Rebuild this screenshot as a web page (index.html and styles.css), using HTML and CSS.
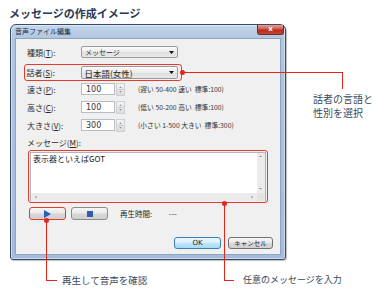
FILE: index.html
```html
<!DOCTYPE html>
<html lang="ja">
<head>
<meta charset="utf-8">
<link rel="stylesheet" href="styles.css">
</head>
<body>
<div class="page">
  <h1 class="heading">メッセージの作成イメージ</h1>
  <div class="window">
    <div class="titlebar">
      <span class="title">音声ファイル編集</span>
      <span class="close">x</span>
    </div>
    <div class="client">
      <div class="row r1">
        <span class="lbl">種類(<u>T</u>):</span>
        <div class="select"><span>メッセージ</span><svg width="5" height="3" viewBox="0 0 5 3"><path d="M0 0H5L2.5 3Z" fill="#111"/></svg></div>
      </div>
      <div class="row hl">
        <span class="lbl">話者(<u>S</u>):</span>
        <div class="select big"><span>日本語(女性)</span><svg width="5" height="3" viewBox="0 0 5 3"><path d="M0 0H5L2.5 3Z" fill="#111"/></svg></div>
      </div>
      <div class="row r3">
        <span class="lbl">速さ(<u>P</u>):</span>
        <div class="spin"><span class="num">100</span></div>
        <div class="spinbtn"><svg width="8" height="13" viewBox="0 0 8 13"><path d="M2.5 4.5L4 3L5.5 4.5Z M2.5 8.5L4 10L5.5 8.5Z" fill="#6b7a8c"/><path d="M0.5 6.5H7.5" stroke="#c8c8c8" stroke-width="1"/></svg></div>
        <span class="hint">(遅い 50-400 速い&nbsp; 標準:100)</span>
      </div>
      <div class="row rn">
        <span class="lbl">高さ(<u>C</u>):</span>
        <div class="spin"><span class="num">100</span></div>
        <div class="spinbtn"><svg width="8" height="13" viewBox="0 0 8 13"><path d="M2.5 4.5L4 3L5.5 4.5Z M2.5 8.5L4 10L5.5 8.5Z" fill="#6b7a8c"/><path d="M0.5 6.5H7.5" stroke="#c8c8c8" stroke-width="1"/></svg></div>
        <span class="hint">(低い 50-200 高い&nbsp; 標準:100)</span>
      </div>
      <div class="row rn">
        <span class="lbl">大きさ(<u>V</u>):</span>
        <div class="spin"><span class="num">300</span></div>
        <div class="spinbtn"><svg width="8" height="13" viewBox="0 0 8 13"><path d="M2.5 4.5L4 3L5.5 4.5Z M2.5 8.5L4 10L5.5 8.5Z" fill="#6b7a8c"/><path d="M0.5 6.5H7.5" stroke="#c8c8c8" stroke-width="1"/></svg></div>
        <span class="hint">(小さい 1-500 大きい&nbsp; 標準:300)</span>
      </div>
      <div class="msglabel">メッセージ(<u>M</u>):</div>
      <div class="msgbox">
        <div class="ta">
          <div class="tatext">表示器といえばGOT</div>
          <div class="vscroll"><svg width="7" height="40" viewBox="0 0 7 40"><path d="M2 4L3.5 2.5L5 4Z M2 35L3.5 36.5L5 35Z" fill="#8a8a8a"/></svg></div>
          <div class="hscroll"><svg width="228" height="8" viewBox="0 0 228 8"><path d="M4 4L5.5 2.5V5.5Z M224 4L222.5 2.5V5.5Z" fill="#8a8a8a"/></svg></div>
          <div class="corner"></div>
        </div>
      </div>
      <div class="ctl">
        <div class="btn play"><svg width="7" height="8" viewBox="0 0 7 8"><path d="M0 0L7 4L0 8Z" fill="#2c5fb4"/></svg></div>
        <div class="btn stop"><span class="sq"></span></div>
        <span class="ptime">再生時間:</span>
        <span class="dash">---</span>
      </div>
      <div class="okrow">
        <div class="btn ok">OK</div>
        <div class="btn cancel">キャンセル</div>
      </div>
    </div>
  </div>

  <div class="callout c1">
    <span class="dot d1"></span>
    <span class="ln l1h"></span>
    <span class="ln l1v"></span>
    <p class="note n1">話者の言語と<br>性別を選択</p>
  </div>
  <div class="callout c2">
    <span class="dot d2"></span>
    <span class="ln l2v"></span>
    <span class="ln l2h"></span>
    <p class="note n2">任意のメッセージを入力</p>
  </div>
  <div class="callout c3">
    <span class="dot d3"></span>
    <span class="ln l3v"></span>
    <span class="ln l3h"></span>
    <p class="note n3">再生して音声を確認</p>
  </div>
</div>
</body>
</html>
```

FILE: styles.css
```css
* { box-sizing: border-box; }
html, body { margin: 0; padding: 0; background: #fff; }
body { font-family: "Noto Sans CJK JP", "Noto Sans", sans-serif; color: #333; }

.page { position: relative; width: 376px; height: 293px; overflow: hidden; }

.heading {
  margin: 0 0 0 9px;
  height: 24px;
  padding-top: 5px;
  font-size: 11px;
  line-height: 16px;
  font-weight: 700;
  color: #2b3b57;
  letter-spacing: 0;
}

.window {
  width: 276px;
  height: 236px;
  margin-left: 10px;
  border: 1px solid #34496b;
  border-radius: 6px 6px 3px 3px;
  background: linear-gradient(180deg, #c4d6ea 0, #afc6e0 14px, #a3bcd9 100%);
  box-shadow: inset 0 0 0 1px rgba(255,255,255,0.45), 1px 1px 1px rgba(0,0,0,0.25);
  padding: 0 4px 4px;
  display: flex;
  flex-direction: column;
}

.titlebar {
  height: 13px;
  display: flex;
  justify-content: space-between;
  align-items: flex-start;
  margin-right: -3px;
}
.title {
  font-size: 7px;
  line-height: 13px;
  color: #1d2b40;
  padding-left: 0;
}
.close {
  width: 27px;
  height: 10px;
  margin-top: 0;
  background: linear-gradient(180deg, #e6a096 0, #d05a4d 45%, #b8281c 55%, #c8463a 100%);
  border: 1px solid #6e2a28;
  border-top: 0;
  border-radius: 0 0 3px 3px;
  color: #fff;
  font-size: 7px;
  font-weight: 700;
  line-height: 9px;
  text-align: center;
  font-family: "DejaVu Sans", sans-serif;
}

.client {
  flex: 1;
  background: #f0f0f0;
  border: 1px solid #8ea4c1;
  display: flex;
  flex-direction: column;
  padding-left: 8px;
}

.row {
  display: flex;
  align-items: center;
  height: 14px;
  border: 1px solid transparent;
  padding-left: 2px;
  font-size: 8px;
}
.r1 { margin-top: 6px; }
.hl {
  margin-top: 5px;
  height: 17px;
  width: 158px;
  border: 1.5px solid #e53a30;
  border-radius: 3px;
  padding-left: 1.5px;
}
.r3 { margin-top: 1px; }
.rn { margin-top: 4px; }

.lbl {
  width: 54px;
  flex: none;
  font-size: 8px;
  color: #2a2a2a;
  white-space: nowrap;
}
.lbl u, .msglabel u { text-decoration-thickness: 1px; text-underline-offset: 1px; }

.select {
  width: 97px;
  height: 12px;
  border: 1px solid #9a9a9a;
  border-radius: 2px;
  background: linear-gradient(180deg, #fafafa 0, #ececec 50%, #dedede 51%, #e8e8e8 100%);
  display: flex;
  align-items: center;
  justify-content: space-between;
  padding: 0 3px 0 3px;
  font-size: 7px;
  color: #333;
}
.select.big { height: 13px; font-size: 8.5px; color: #222; }

.spin {
  width: 34px;
  height: 12px;
  background: #fff;
  border: 1px solid #b8bcc4;
  display: flex;
  align-items: center;
  padding-left: 4px;
}
.num { font-size: 8px; color: #333; font-family: "DejaVu Sans", sans-serif; }
.spinbtn {
  width: 9px;
  height: 13px;
  margin-left: 1px;
  background: linear-gradient(180deg, #f4f4f4, #dcdcdc);
  border: 1px solid #d0d0d0;
  display: flex;
  align-items: center;
  justify-content: center;
}
.hint {
  margin-left: 13px;
  font-size: 6.8px;
  color: #333;
  white-space: nowrap;
}

.msglabel {
  margin-top: 5px;
  height: 12px;
  padding-left: 3px;
  font-size: 8px;
  line-height: 12px;
  color: #2a2a2a;
}

.msgbox {
  margin-top: 1px;
  margin-left: 4px;
  width: 240px;
  height: 53px;
  border: 1.5px solid #e53a30;
  border-radius: 3px;
  padding: 1px;
}
.ta {
  height: 100%;
  border: 1px solid #b0b4bc;
  background: #fff;
  display: grid;
  grid-template-columns: 1fr 8px;
  grid-template-rows: 1fr 8px;
}
.tatext {
  font-size: 8px;
  line-height: 11px;
  padding: 0 0 0 2px;
  color: #222;
}
.vscroll { background: #ebebeb; display: flex; }
.hscroll { background: #ebebeb; display: flex; overflow: hidden; }
.corner { background: #e3e3e3; }

.ctl {
  margin-top: 4px;
  height: 13px;
  display: flex;
  align-items: center;
  padding-left: 5px;
}
.btn {
  display: flex;
  align-items: center;
  justify-content: center;
  border-radius: 3px;
  background: linear-gradient(180deg, #f6f6f6 0, #e8e8e8 48%, #d8d8d8 52%, #d0d0d0 100%);
  border: 1px solid #8c8c8c;
}
.play {
  width: 37px;
  height: 13px;
  border: 1.5px solid #e53a30;
}
.stop {
  width: 37px;
  height: 13px;
  margin-left: 5px;
}
.sq { width: 6px; height: 6px; background: #2f5cac; }
.ptime { margin-left: 12px; font-size: 7.5px; color: #222; }
.dash { margin-left: 17px; font-size: 7.5px; color: #333; }

.okrow {
  margin-top: 17px;
  display: flex;
  justify-content: flex-end;
  padding-right: 7px;
  gap: 7px;
}
.ok {
  width: 47px;
  height: 12px;
  border-color: #3c7fb1;
  background: linear-gradient(180deg, #eaf6fd 0, #d9f0fc 48%, #bee6fd 52%, #a7d9f5 100%);
  font-size: 7px;
  color: #222;
  font-family: "DejaVu Sans", sans-serif;
}
.cancel {
  width: 45px;
  height: 12px;
  border-color: #707070;
  font-size: 6.5px;
  color: #222;
}

/* callouts */
.callout { position: absolute; left: 0; top: 0; }
.dot {
  position: absolute;
  width: 5px;
  height: 5px;
  border-radius: 50%;
  background: #e3261d;
}
.ln { position: absolute; background: #e3261d; }
.d1 { left: 180px; top: 69.5px; }
.l1h { left: 182px; top: 71.5px; width: 161px; height: 1px; }
.l1v { left: 342px; top: 71.5px; width: 1px; height: 17px; }
.note {
  position: absolute;
  margin: 0;
  white-space: nowrap;
  color: #3c4856;
}
.n1 { left: 313px; top: 92px; font-size: 10px; line-height: 14px; }
.d2 { left: 221.5px; top: 200.5px; }
.l2v { left: 223.5px; top: 203px; width: 1px; height: 77px; }
.l2h { left: 223.5px; top: 279.5px; width: 10px; height: 1px; }
.n2 { left: 243px; top: 273px; font-size: 9px; line-height: 14px; }
.d3 { left: 44px; top: 217.5px; }
.l3v { left: 46px; top: 220px; width: 1px; height: 60px; }
.l3h { left: 46px; top: 279.5px; width: 11px; height: 1px; }
.n3 { left: 62px; top: 273px; font-size: 9.5px; line-height: 14px; }
```
